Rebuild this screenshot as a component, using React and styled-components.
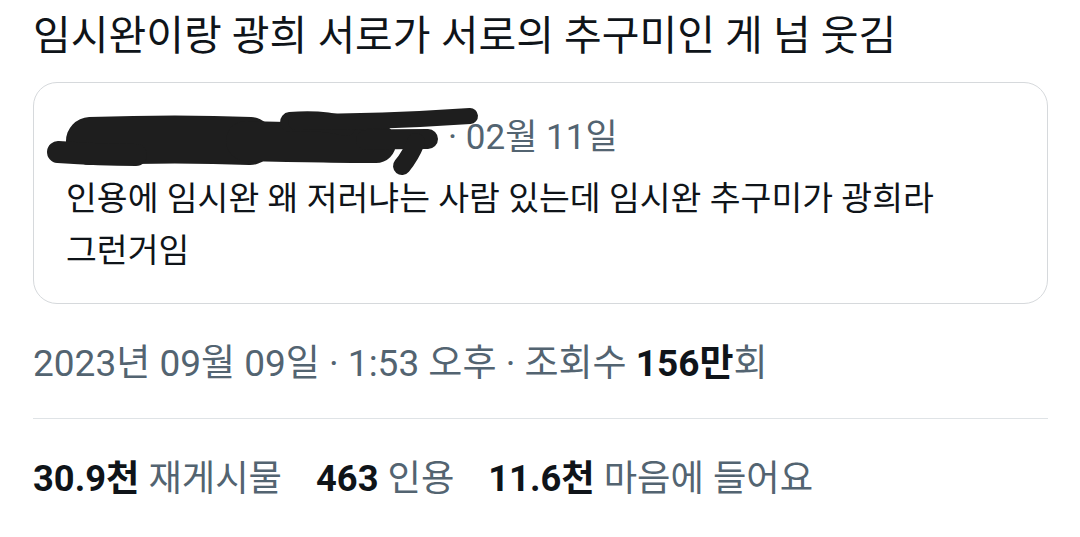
import React from 'react'
import styled, { createGlobalStyle } from 'styled-components'

const GlobalStyle = createGlobalStyle`
  body {
    margin: 0;
    background: #fff;
    font-family: Roboto, "Noto Sans CJK KR", sans-serif;
    color: #0f1419;
  }
`

const Page = styled.div`
  width: 1080px;
  height: 537px;
  overflow: hidden;
  box-sizing: border-box;
  padding: 12px 32px 0 33px;
`

const Title = styled.h1`
  margin: 0;
  font-size: 41px;
  font-weight: 400;
  line-height: 48px;
`

const QuoteCard = styled.div`
  margin-top: 22px;
  border: 1px solid #d6d9dc;
  border-radius: 24px;
  padding: 24px 30px 26px 12px;
`

const QuoteHeader = styled.div`
  display: flex;
  align-items: center;
  height: 62px;
`

// the author's name is scribbled over in the screenshot
const Redaction = styled.svg`
  flex: none;
  width: 432px;
  height: 62px;
  overflow: visible;
`

const QuoteDate = styled.span`
  margin-left: -30px;
  font-size: 35px;
  line-height: 40px;
  color: #536471;
`

const QuoteText = styled.p`
  margin: 4px 0 0 20px;
  font-size: 33.5px;
  line-height: 52px;
`

const Meta = styled.div`
  margin-top: 36px;
  font-size: 37px;
  line-height: 48px;
  color: #536471;
`

const Strong = styled.b`
  font-weight: 700;
  color: #0f1419;
`

const Divider = styled.hr`
  margin: 30px 0 0;
  border: 0;
  border-top: 1px solid #dfe3e6;
`

const Stats = styled.div`
  display: flex;
  gap: 34px;
  margin-top: 36px;
  font-size: 36.3px;
  line-height: 48px;
`

const Stat = styled.span`
  color: #536471;
`

const Ink = ({ d, w }) => (
  <path d={d} fill="none" stroke="#1e1e1e" strokeWidth={w} strokeLinecap="round" strokeLinejoin="round" />
)

const stats = [
  ['30.9천', '재게시물'],
  ['463', '인용'],
  ['11.6천', '마음에 들어요'],
]

export default function App() {
  return (
    <Page>
      <GlobalStyle />
      <Title>임시완이랑 광희 서로가 서로의 추구미인 게 넘 웃김</Title>
      <QuoteCard>
        <QuoteHeader>
          <Redaction viewBox="0 0 432 62">
            <Ink w={48} d="M44 34 C100 32 160 32 204 34" />
            <Ink w={22} d="M12 45 C40 47 70 48 90 48" />
            <Ink w={40} d="M200 34 C250 35 300 36 330 36" />
            <Ink w={20} d="M244 15 C265 13 285 15 300 19" />
            <Ink w={16} d="M250 15 C320 15 380 12 424 9" />
            <Ink w={20} d="M320 33 C345 32 365 32 382 32" />
            <Ink w={18} d="M370 35 C366 45 361 53 356 59" />
          </Redaction>
          <QuoteDate>· 02월 11일</QuoteDate>
        </QuoteHeader>
        <QuoteText>
          인용에 임시완 왜 저러냐는 사람 있는데 임시완 추구미가 광희라
          <br />
          그런거임
        </QuoteText>
      </QuoteCard>
      <Meta>
        2023년 09월 09일 · 1:53 오후 · 조회수 <Strong>156만</Strong>회
      </Meta>
      <Divider />
      <Stats>
        {stats.map(([n, label]) => (
          <Stat key={label}>
            <Strong>{n}</Strong> {label}
          </Stat>
        ))}
      </Stats>
    </Page>
  )
}
